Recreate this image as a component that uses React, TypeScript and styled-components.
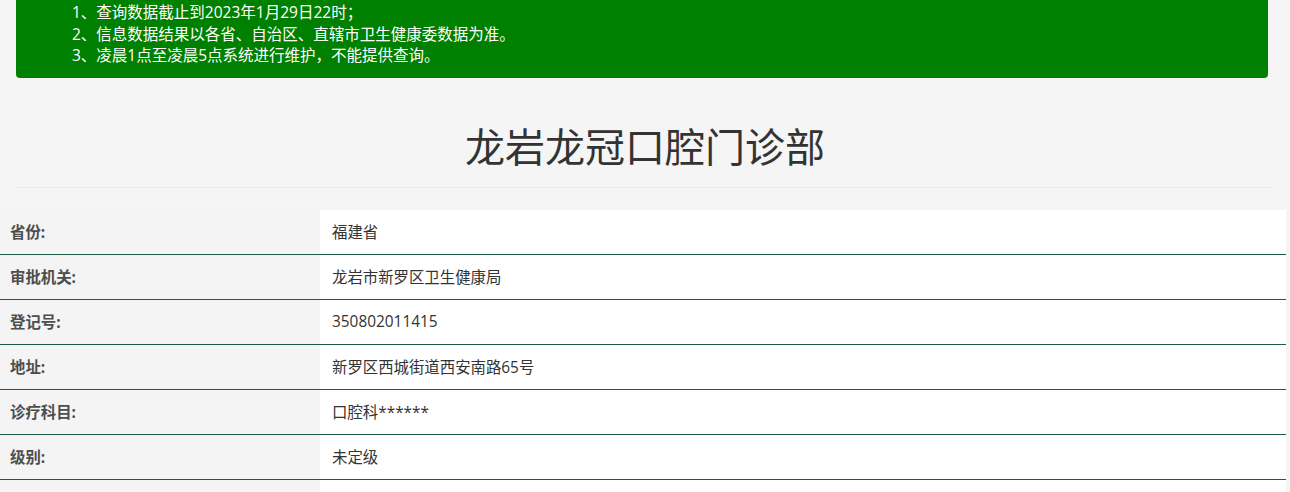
import React from "react";
import styled, { createGlobalStyle } from "styled-components";

const Global = createGlobalStyle`
  html, body {
    margin: 0;
    padding: 0;
    background: #f5f5f5;
    font-family: "Open Sans", "Noto Sans CJK SC", sans-serif;
    color: #333;
  }
  * { box-sizing: border-box; }
`;

const Page = styled.div`
  display: flex;
  flex-direction: column;
  overflow: hidden;
`;

const Notice = styled.div`
  margin: -20px 22px 0 16px;
  padding: 22px 0 11px 56px;
  background: #008000;
  border-radius: 4px;
  color: #fff;
  font-size: 15.5px;
  line-height: 21.5px;
`;

const NoticeLine = styled.div``;

const Title = styled.h1`
  margin: 0;
  padding: 47px 0 18px;
  text-align: center;
  font-size: 40px;
  line-height: 44px;
  font-weight: 400;
  color: #333;
`;

const Rule = styled.div`
  height: 1px;
  margin: 0 20px 22px 16px;
  background: #eaeaea;
`;

const Table = styled.div`
  display: flex;
  flex-direction: column;
  width: 1286px;
`;

const Row = styled.div`
  display: grid;
  grid-template-columns: 320px 1fr;
  height: 45px;
  border-bottom: 1px solid #1d5c3c;
`;

const Label = styled.div`
  display: flex;
  align-items: center;
  padding-left: 10px;
  background: #f4f4f4;
  font-size: 15.4px;
  font-weight: 700;
  color: #4d4d4d;
`;

const Value = styled.div`
  display: flex;
  align-items: center;
  padding-left: 12px;
  background: #fff;
  font-size: 15.4px;
  color: #333;
`;

const rows: [string, string][] = [
  ["省份:", "福建省"],
  ["审批机关:", "龙岩市新罗区卫生健康局"],
  ["登记号:", "350802011415"],
  ["地址:", "新罗区西城街道西安南路65号"],
  ["诊疗科目:", "口腔科******"],
  ["级别:", "未定级"],
  ["", ""],
];

export default function App() {
  return (
    <Page>
      <Global />
      <Notice>
        <NoticeLine>1、查询数据截止到2023年1月29日22时；</NoticeLine>
        <NoticeLine>2、信息数据结果以各省、自治区、直辖市卫生健康委数据为准。</NoticeLine>
        <NoticeLine>3、凌晨1点至凌晨5点系统进行维护，不能提供查询。</NoticeLine>
      </Notice>
      <Title>龙岩龙冠口腔门诊部</Title>
      <Rule />
      <Table>
        {rows.map(([l, v], i) => (
          <Row key={i}>
            <Label>{l}</Label>
            <Value>{v}</Value>
          </Row>
        ))}
      </Table>
    </Page>
  );
}
